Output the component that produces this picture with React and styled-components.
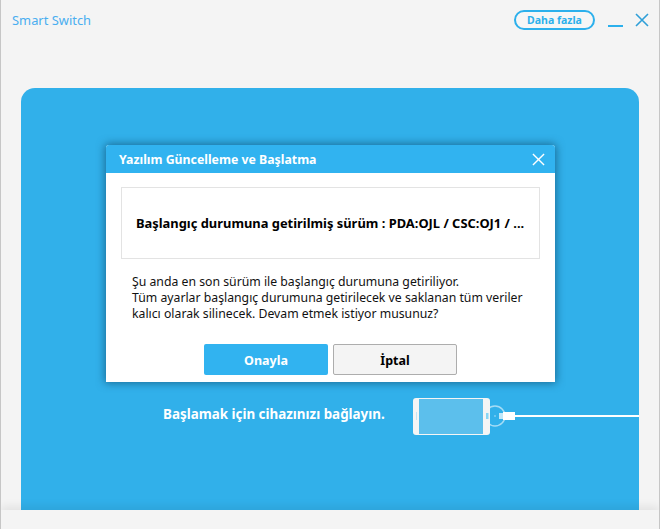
import React from "react"
import styled, { createGlobalStyle } from "styled-components"

const GlobalStyle = createGlobalStyle`
  html, body {
    margin: 0;
    padding: 0;
    background: #f4f4f4;
  }
  * {
    box-sizing: border-box;
  }
`

const Window = styled.div`
  position: relative;
  width: 660px;
  height: 529px;
  display: flex;
  flex-direction: column;
  overflow: hidden;
  background: #f4f4f4;
  border-left: 1px solid #c6c6c6;
  border-right: 1px solid #c6c6c6;
  font-family: "Noto Sans", "Open Sans", sans-serif;
`

const TitleBar = styled.header`
  height: 88px;
  flex: none;
  display: flex;
  align-items: flex-start;
  justify-content: space-between;
  padding: 10px 10px 0 11px;
`

const AppName = styled.div`
  font-size: 12.9px;
  line-height: 20px;
  color: #4aaef0;
`

const Controls = styled.div`
  display: flex;
  align-items: center;
`

const MoreButton = styled.button`
  width: 81px;
  height: 20px;
  padding: 0;
  border: 2px solid #2cb0ec;
  border-radius: 10px;
  background: #f6f6f6;
  color: #2cb0ec;
  font-family: inherit;
  font-size: 10.5px;
  font-weight: 700;
  line-height: 15px;
`

const IconButton = styled.span`
  display: flex;
  margin-left: ${(p) => p.$gap}px;
`

const Panel = styled.main`
  flex: 1;
  margin: 0 20px;
  border-radius: 14px 14px 0 0;
  background: #31b0ea;
  display: flex;
  flex-direction: column;
  padding-top: 307px;
`

const ConnectRow = styled.div`
  display: flex;
  align-items: center;
  padding-left: 142px;
`

const ConnectText = styled.div`
  width: 250px;
  padding-bottom: 4px;
  color: #fff;
  font-size: 13.4px;
  font-weight: 700;
  line-height: 18px;
  white-space: nowrap;
`

const Cable = styled.div`
  flex: 1;
  height: 2px;
  background: #fff;
`

const Footer = styled.footer`
  height: 19px;
  flex: none;
  background: #f4f4f4;
  box-shadow: 0 -4px 8px rgba(0, 0, 0, 0.07);
`

const Dialog = styled.section`
  position: absolute;
  left: 105px;
  top: 145px;
  width: 449px;
  height: 237px;
  display: flex;
  flex-direction: column;
  border-radius: 3px 3px 0 0;
  background: #fff;
  box-shadow: 0 0 8px 1px rgba(10, 60, 90, 0.6);
`

const DialogHeader = styled.div`
  height: 28px;
  flex: none;
  display: flex;
  align-items: center;
  justify-content: space-between;
  padding: 0 10px 0 13px;
  border-radius: 3px 3px 0 0;
  background: #31b3f0;
  color: #fff;
  font-size: 12.3px;
  font-weight: 700;
`

const DialogBody = styled.div`
  flex: 1;
  display: flex;
  flex-direction: column;
  padding: 14px 15px 7px;
`

const VersionBox = styled.div`
  height: 72px;
  flex: none;
  display: flex;
  align-items: center;
  padding: 0 14px;
  border: 1px solid #e3e3e3;
  color: #000;
  font-size: 12.9px;
  font-weight: 700;
  white-space: nowrap;
`

const Message = styled.p`
  margin: 15px 0 0 11px;
  color: #111;
  font-size: 12.25px;
  line-height: 16px;
`

const Buttons = styled.div`
  margin-top: auto;
  display: flex;
  justify-content: center;
  gap: 5px;
`

const DialogButton = styled.button`
  width: 124px;
  height: 31px;
  padding: 2px 0 0;
  border-radius: 2px;
  border: ${(p) => (p.$primary ? "none" : "1px solid #adadad")};
  background: ${(p) => (p.$primary ? "#31b3f0" : "#f4f4f4")};
  color: ${(p) => (p.$primary ? "#fff" : "#000")};
  font-family: inherit;
  font-size: 12.5px;
  font-weight: 700;
`

const CloseIcon = ({ size, color, width }) => (
  <svg width={size} height={size} viewBox="0 0 14 14" fill="none" stroke={color} strokeWidth={width}>
    <path d="M1 1l12 12M13 1L1 13" />
  </svg>
)

const PhoneIcon = () => (
  <svg width="114" height="42" viewBox="0 0 114 42" style={{ flex: "none", display: "block" }}>
    <circle cx="82" cy="21" r="10" fill="none" stroke="#a5dcf5" strokeWidth="1.5" />
    <circle cx="82" cy="21" r="1" fill="#7ccdf2" />
    <rect x="0" y="3" width="77" height="37" rx="3" fill="#f5f5f5" />
    <rect x="6" y="4" width="64" height="35" fill="#5cbfec" />
    <rect x="3" y="17" width="1" height="8" fill="#c5e5f5" />
    <rect x="73" y="18" width="2.5" height="6" fill="#8ad6f5" />
    <rect x="86" y="18" width="4" height="6" fill="#bfe7f9" />
    <rect x="90" y="17" width="12" height="8" fill="#fff" />
    <rect x="102" y="20" width="12" height="2" fill="#fff" />
  </svg>
)

const App = () => (
  <>
    <GlobalStyle />
    <Window>
      <TitleBar>
        <AppName>Smart Switch</AppName>
        <Controls>
          <MoreButton>Daha fazla</MoreButton>
          <IconButton $gap={13}>
            <svg width="16" height="20" viewBox="0 0 16 20">
              <rect x="0" y="15" width="15" height="2" fill="#2cb0ec" />
            </svg>
          </IconButton>
          <IconButton $gap={11}>
            <CloseIcon size={14} color="#2f9fd8" width={1.6} />
          </IconButton>
        </Controls>
      </TitleBar>
      <Panel>
        <ConnectRow>
          <ConnectText>Başlamak için cihazınızı bağlayın.</ConnectText>
          <PhoneIcon />
          <Cable />
        </ConnectRow>
      </Panel>
      <Footer />
      <Dialog>
        <DialogHeader>
          Yazılım Güncelleme ve Başlatma
          <CloseIcon size={13} color="#fff" width={1.5} />
        </DialogHeader>
        <DialogBody>
          <VersionBox>Başlangıç durumuna getirilmiş sürüm : PDA:OJL / CSC:OJ1 / ...</VersionBox>
          <Message>
            Şu anda en son sürüm ile başlangıç durumuna getiriliyor.
            <br />
            Tüm ayarlar başlangıç durumuna getirilecek ve saklanan tüm veriler
            <br />
            kalıcı olarak silinecek. Devam etmek istiyor musunuz?
          </Message>
          <Buttons>
            <DialogButton $primary>Onayla</DialogButton>
            <DialogButton>İptal</DialogButton>
          </Buttons>
        </DialogBody>
      </Dialog>
    </Window>
  </>
)

export default App
